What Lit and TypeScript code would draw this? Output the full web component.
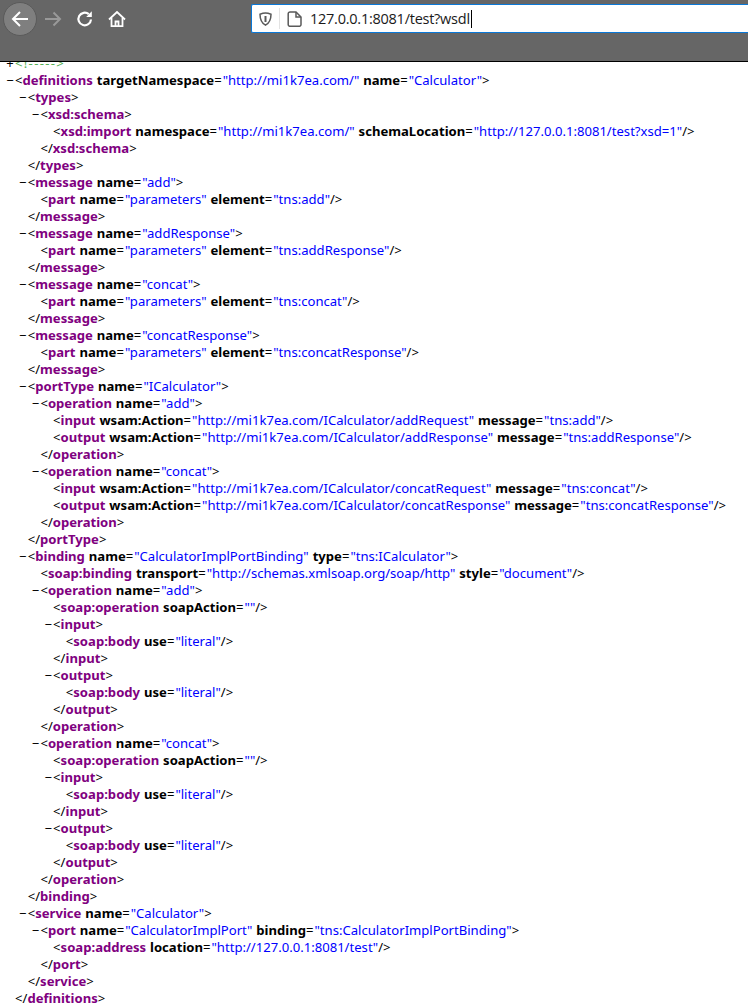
import { LitElement, html, css } from "lit";
import { customElement } from "lit/decorators.js";

type Row = [number, boolean, string];
const rows: Row[] = [];
const add = (d: number, m: boolean, s: string) => rows.push([d, m, s]);
add(0, true, '<definitions targetNamespace="http://mi1k7ea.com/" name="Calculator">');
add(1, true, "<types>");
add(2, true, "<xsd:schema>");
add(3, false, '<xsd:import namespace="http://mi1k7ea.com/" schemaLocation="http://127.0.0.1:8081/test?xsd=1"/>');
add(2, false, "</xsd:schema>");
add(1, false, "</types>");
for (const n of ["add", "addResponse", "concat", "concatResponse"]) {
  add(1, true, `<message name="${n}">`);
  add(2, false, `<part name="parameters" element="tns:${n}"/>`);
  add(1, false, "</message>");
}
add(1, true, '<portType name="ICalculator">');
for (const n of ["add", "concat"]) {
  add(2, true, `<operation name="${n}">`);
  add(3, false, `<input wsam:Action="http://mi1k7ea.com/ICalculator/${n}Request" message="tns:${n}"/>`);
  add(3, false, `<output wsam:Action="http://mi1k7ea.com/ICalculator/${n}Response" message="tns:${n}Response"/>`);
  add(2, false, "</operation>");
}
add(1, false, "</portType>");
add(1, true, '<binding name="CalculatorImplPortBinding" type="tns:ICalculator">');
add(2, false, '<soap:binding transport="http://schemas.xmlsoap.org/soap/http" style="document"/>');
for (const n of ["add", "concat"]) {
  add(2, true, `<operation name="${n}">`);
  add(3, false, '<soap:operation soapAction=""/>');
  for (const io of ["input", "output"]) {
    add(3, true, `<${io}>`);
    add(4, false, '<soap:body use="literal"/>');
    add(3, false, `</${io}>`);
  }
  add(2, false, "</operation>");
}
add(1, false, "</binding>");
add(1, true, '<service name="Calculator">');
add(2, true, '<port name="CalculatorImplPort" binding="tns:CalculatorImplPortBinding">');
add(3, false, '<soap:address location="http://127.0.0.1:8081/test"/>');
add(2, false, "</port>");
add(1, false, "</service>");
add(0, false, "</definitions>");

function tokens(s: string) {
  const m = s.match(/^(<\/?)([^\s/>]+)(.*?)(\/?>)$/)!;
  const attrs = [...m[3].matchAll(/\s([^=\s]+)=("[^"]*")/g)];
  return html`<span class="p">${m[1]}</span><span class="t">${m[2]}</span>${attrs.map(
    (a) => html` <span class="a">${a[1]}</span><span class="p eq">=</span><span class="v">${a[2]}</span>`
  )}<span class="p">${m[4]}</span>`;
}

@customElement("app-root")
export class AppRoot extends LitElement {
  static styles = css`
    :host { display: block; width: 748px; height: 1006px; overflow: hidden; background: #fff; }
    .bar { height: 61px; background: #666; border-bottom: 1px solid #000; display: flex; align-items: flex-start; position: relative; z-index: 1; }
    .nav { width: 251px; flex: none; display: flex; align-items: center; height: 38px; }
    .back { width: 32px; height: 32px; margin-left: 3px; border-radius: 50%; background: #7f7f7f; border: 1px solid #5a5a5a; display: flex; align-items: center; justify-content: center; flex: none; }
    .ic { display: flex; align-items: center; justify-content: center; width: 32px; height: 32px; flex: none; }
    .url { flex: 1; margin-top: 4px; height: 27px; background: #fff; border: 1px solid #0a78d7; border-right: none; border-radius: 2px 0 0 2px; display: flex; align-items: center; font: 14.5px/27px "Open Sans", sans-serif; letter-spacing: -0.25px; color: #1a1a1a; }
    .shield { margin-left: 7px; display: flex; }
    .sep { width: 1px; height: 21px; background: #e3e3e3; margin: 0 7px; }
    .pg { display: flex; margin-right: 8px; }
    .caret { display: inline-block; width: 1px; height: 18px; background: #000; margin-left: 1px; }
    .doc { margin-top: -7.5px; font: 13px/17px "Noto Sans", sans-serif; color: #000; }
    .row { display: flex; height: 17px; }
    .m { width: 10px; flex: none; text-align: center; }
    .code { flex: none; white-space: pre; font-size: 13.1px; word-spacing: 0.5px; }
    .p { color: #000; }
    .eq { letter-spacing: 1px; }
    .t { color: #800080; font-weight: 700; }
    .a { color: #000; font-weight: 700; }
    .v { color: #00f; }
    .c { color: #55b055; letter-spacing: 1.3px; }
  `;

  render() {
    return html`
      <div class="bar">
        <div class="nav">
          <div class="back">
            <svg width="20" height="20" viewBox="0 0 20 20" fill="none" stroke="#fff" stroke-width="2"><path d="M18 10H3M10 3l-7 7 7 7"/></svg>
          </div>
          <div class="ic">
            <svg width="18" height="18" viewBox="0 0 18 18" fill="none" stroke="#999" stroke-width="2"><path d="M1 9h15M9.500 2.500L16 9l-6.500 6.500"/></svg>
          </div>
          <div class="ic">
            <svg width="18" height="18" viewBox="0 0 18 18" fill="none" stroke="#fff" stroke-width="2.200"><path d="M15 9.500A6.300 6.300 0 1 1 12.800 4.200"/><path d="M15.800 1.300v5.600h-5.600z" fill="#fff" stroke="none"/></svg>
          </div>
          <div class="ic">
            <svg width="18" height="18" viewBox="0 0 18 18" fill="none" stroke="#fff" stroke-width="1.800"><path d="M1 9.500L9 2l8 7.500"/><path d="M3.500 8v8.200h11V8"/><path d="M7.500 16v-4.500h3V16"/></svg>
          </div>
        </div>
        <div class="url">
          <span class="shield"><svg width="13" height="14" viewBox="0 0 13 14" fill="none" stroke="#5a5a5a" stroke-width="1.500"><path d="M1 2.200C3 1.400 4.600 1 6.500 1s3.500.4 5.500 1.200c0 5-1.500 8.700-5.500 11C2.500 10.900 1 7.200 1 2.200z"/><path d="M6.500 4v6" stroke-width="2"/></svg></span>
          <span class="sep"></span>
          <span class="pg"><svg width="15" height="16" viewBox="0 0 15 16" fill="none" stroke="#5a5a5a" stroke-width="1.500"><path d="M3 1h6l5 5v7.500a1.800 1.800 0 0 1-1.800 1.800H3a1.800 1.800 0 0 1-1.800-1.800V2.800A1.800 1.800 0 0 1 3 1z"/><path d="M9 1v5h5"/></svg></span>
          <span>127.0.0.1:8081/test?wsdl</span><span class="caret"></span>
        </div>
      </div>
      <div class="doc">
        <div class="row" style="padding-left:5px"><span class="m">+</span><span class="code c">&lt;!-----&gt;</span></div>
        ${rows.map(
          ([d, m, s]) => html`<div class="row" style="padding-left:${5 + d * 12.7}px"><span class="m">${m ? "−" : ""}</span><span class="code">${tokens(s)}</span></div>`
        )}
      </div>
    `;
  }
}
